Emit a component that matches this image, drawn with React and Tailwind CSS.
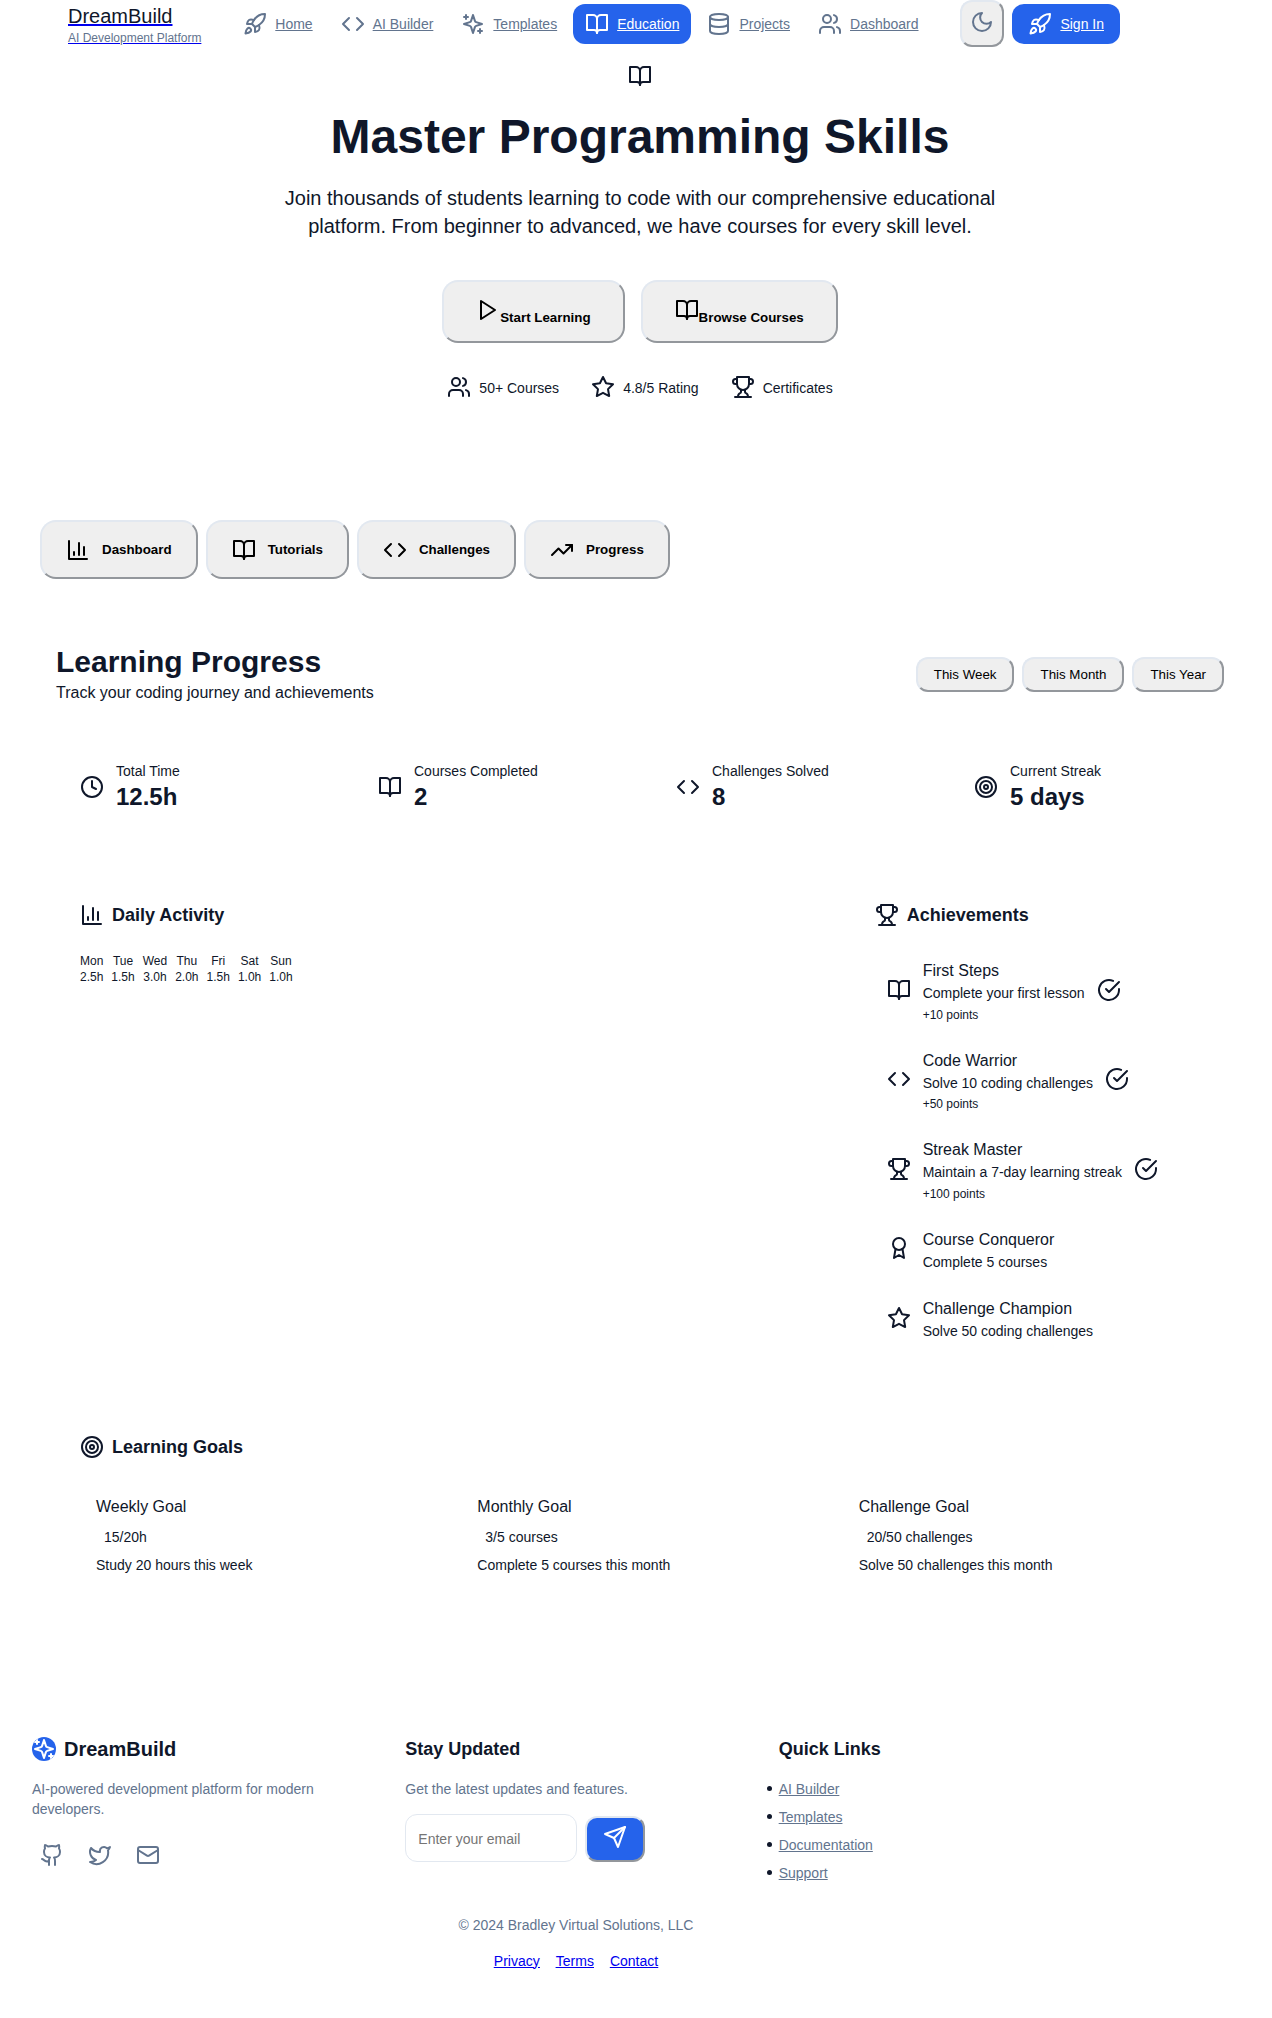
import React from "react";

function Icon({ children, className = "" }) {
  return (
    <svg
      width="24"
      height="24"
      viewBox="0 0 24 24"
      fill="none"
      stroke="currentColor"
      strokeWidth="2"
      strokeLinecap="round"
      strokeLinejoin="round"
      className={"shrink-0 " + className}
    >
      {children}
    </svg>
  );
}

const Rocket = (p) => (
  <Icon {...p}>
    <path d="M4.5 16.5c-1.5 1.26-2 5-2 5s3.74-.5 5-2c.71-.84.7-2.13-.09-2.91a2.18 2.18 0 0 0-2.91-.09z" />
    <path d="m12 15-3-3a22 22 0 0 1 2-3.95A12.88 12.88 0 0 1 22 2c0 2.72-.78 7.5-6 11a22.35 22.35 0 0 1-4 2z" />
    <path d="M9 12H4s.55-3.03 2-4c1.62-1.08 5 0 5 0" />
    <path d="M12 15v5s3.03-.55 4-2c1.08-1.62 0-5 0-5" />
  </Icon>
);
const Code = (p) => (
  <Icon {...p}>
    <polyline points="16 18 22 12 16 6" />
    <polyline points="8 6 2 12 8 18" />
  </Icon>
);
const Sparkles = (p) => (
  <Icon {...p}>
    <path d="m12 3-1.912 5.813a2 2 0 0 1-1.275 1.275L3 12l5.813 1.912a2 2 0 0 1 1.275 1.275L12 21l1.912-5.813a2 2 0 0 1 1.275-1.275L21 12l-5.813-1.912a2 2 0 0 1-1.275-1.275L12 3Z" />
    <path d="M5 3v4" />
    <path d="M19 17v4" />
    <path d="M3 5h4" />
    <path d="M17 19h4" />
  </Icon>
);
const Book = (p) => (
  <Icon {...p}>
    <path d="M2 3h6a4 4 0 0 1 4 4v14a3 3 0 0 0-3-3H2z" />
    <path d="M22 3h-6a4 4 0 0 0-4 4v14a3 3 0 0 1 3-3h7z" />
  </Icon>
);
const Database = (p) => (
  <Icon {...p}>
    <ellipse cx="12" cy="5" rx="9" ry="3" />
    <path d="M3 5V19A9 3 0 0 0 21 19V5" />
    <path d="M3 12A9 3 0 0 0 21 12" />
  </Icon>
);
const Users = (p) => (
  <Icon {...p}>
    <path d="M16 21v-2a4 4 0 0 0-4-4H6a4 4 0 0 0-4 4v2" />
    <circle cx="9" cy="7" r="4" />
    <path d="M22 21v-2a4 4 0 0 0-3-3.87" />
    <path d="M16 3.13a4 4 0 0 1 0 7.75" />
  </Icon>
);
const Moon = (p) => (
  <Icon {...p}>
    <path d="M12 3a6 6 0 0 0 9 9 9 9 0 1 1-9-9Z" />
  </Icon>
);
const Play = (p) => (
  <Icon {...p}>
    <polygon points="5 3 19 12 5 21 5 3" />
  </Icon>
);
const Star = (p) => (
  <Icon {...p}>
    <polygon points="12 2 15.09 8.26 22 9.27 17 14.14 18.18 21.02 12 17.77 5.82 21.02 7 14.14 2 9.27 8.91 8.26 12 2" />
  </Icon>
);
const Trophy = (p) => (
  <Icon {...p}>
    <path d="M6 9H4.5a2.5 2.5 0 0 1 0-5H6" />
    <path d="M18 9h1.5a2.5 2.5 0 0 0 0-5H18" />
    <path d="M4 22h16" />
    <path d="M10 14.66V17c0 .55-.47.98-.97 1.21C7.85 18.75 7 20.24 7 22" />
    <path d="M14 14.66V17c0 .55.47.98.97 1.21C16.15 18.75 17 20.24 17 22" />
    <path d="M18 2H6v7a6 6 0 0 0 12 0V2Z" />
  </Icon>
);
const Chart = (p) => (
  <Icon {...p}>
    <path d="M3 3v18h18" />
    <path d="M18 17V9" />
    <path d="M13 17V5" />
    <path d="M8 17v-3" />
  </Icon>
);
const Trending = (p) => (
  <Icon {...p}>
    <polyline points="22 7 13.5 15.5 8.5 10.5 2 17" />
    <polyline points="16 7 22 7 22 13" />
  </Icon>
);
const Clock = (p) => (
  <Icon {...p}>
    <circle cx="12" cy="12" r="10" />
    <polyline points="12 6 12 12 16 14" />
  </Icon>
);
const Target = (p) => (
  <Icon {...p}>
    <circle cx="12" cy="12" r="10" />
    <circle cx="12" cy="12" r="6" />
    <circle cx="12" cy="12" r="2" />
  </Icon>
);
const Award = (p) => (
  <Icon {...p}>
    <circle cx="12" cy="8" r="6" />
    <path d="M15.477 12.89 17 22l-5-3-5 3 1.523-9.11" />
  </Icon>
);
const CheckCircle = (p) => (
  <Icon {...p}>
    <path d="M22 11.08V12a10 10 0 1 1-5.93-9.14" />
    <path d="m9 11 3 3L22 4" />
  </Icon>
);
const Github = (p) => (
  <Icon {...p}>
    <path d="M15 22v-4a4.8 4.8 0 0 0-1-3.5c3 0 6-2 6-5.5.08-1.25-.27-2.48-1-3.5.28-1.15.28-2.35 0-3.5 0 0-1 0-3 1.5-2.64-.5-5.36-.5-8 0C6 2 5 2 5 2c-.3 1.15-.3 2.35 0 3.5A5.403 5.403 0 0 0 4 9c0 3.5 3 5.5 6 5.5-.39.49-.68 1.05-.85 1.65-.17.6-.22 1.23-.15 1.85v4" />
    <path d="M9 18c-4.51 2-5-2-7-2" />
  </Icon>
);
const Twitter = (p) => (
  <Icon {...p}>
    <path d="M22 4s-.7 2.1-2 3.4c1.6 10-9.4 17.3-18 11.6 2.2.1 4.4-.6 6-2C3 15.5.5 9.6 3 5c2.2 2.6 5.6 4.1 9 4-.9-4.2 4-6.6 7-3.8 1.1 0 3-1.2 3-1.2z" />
  </Icon>
);
const Mail = (p) => (
  <Icon {...p}>
    <rect width="20" height="16" x="2" y="4" rx="2" />
    <path d="m22 7-8.97 5.7a1.94 1.94 0 0 1-2.06 0L2 7" />
  </Icon>
);
const Send = (p) => (
  <Icon {...p}>
    <path d="m22 2-7 20-4-9-9-4Z" />
    <path d="M22 2 11 13" />
  </Icon>
);

const NAV = [
  ["Home", Rocket],
  ["AI Builder", Code],
  ["Templates", Sparkles],
  ["Education", Book],
  ["Projects", Database],
  ["Dashboard", Users],
];

const TABS = [
  ["Dashboard", Chart],
  ["Tutorials", Book],
  ["Challenges", Code],
  ["Progress", Trending],
];

const STATS = [
  ["Total Time", "12.5h", Clock],
  ["Courses Completed", "2", Book],
  ["Challenges Solved", "8", Code],
  ["Current Streak", "5 days", Target],
];

const DAYS = [
  ["Mon", "2.5h"],
  ["Tue", "1.5h"],
  ["Wed", "3.0h"],
  ["Thu", "2.0h"],
  ["Fri", "1.5h"],
  ["Sat", "1.0h"],
  ["Sun", "1.0h"],
];

const ACHIEVEMENTS = [
  ["First Steps", "Complete your first lesson", "+10 points", Book],
  ["Code Warrior", "Solve 10 coding challenges", "+50 points", Code],
  ["Streak Master", "Maintain a 7-day learning streak", "+100 points", Trophy],
  ["Course Conqueror", "Complete 5 courses", null, Award],
  ["Challenge Champion", "Solve 50 coding challenges", null, Star],
];

const GOALS = [
  ["Weekly Goal", "15/20h", "Study 20 hours this week"],
  ["Monthly Goal", "3/5 courses", "Complete 5 courses this month"],
  ["Challenge Goal", "20/50 challenges", "Solve 50 challenges this month"],
];

const BUTTON = "border-2 border-[#e2e8f0] [border-style:outset] bg-[#efefef] text-black text-[13.333px]";

function Header() {
  return (
    <header className="flex h-12 w-[1120px] items-center justify-between pl-[68px]">
      <a href="#" className="flex flex-col">
        <span className="text-xl leading-7 underline decoration-[#0000ee]">DreamBuild</span>
        <span className="text-xs leading-4 text-slate-500 underline decoration-[#0000ee]">
          AI Development Platform
        </span>
      </a>
      <nav className="flex gap-1">
        {NAV.map(([label, Glyph]) => (
          <a
            key={label}
            href="#"
            className={
              "flex h-10 items-center gap-2 rounded-xl px-3 text-sm underline " +
              (label === "Education" ? "bg-[#2563eb] text-white" : "text-slate-500")
            }
          >
            <Glyph />
            {label}
          </a>
        ))}
      </nav>
      <div className="flex h-12 items-center gap-2">
        <button className={BUTTON + " h-[47px] self-start rounded-xl px-2 pt-2 pb-[11px]"}>
          <Moon className="text-slate-500" />
        </button>
        <a
          href="#"
          className="flex h-10 items-center gap-2 rounded-xl bg-[#2563eb] px-4 text-sm text-white underline"
        >
          <Rocket />
          Sign In
        </a>
      </div>
    </header>
  );
}

function Hero() {
  return (
    <section className="flex w-[1280px] flex-col items-center pt-4">
      <Book />
      <h1 className="mt-[19px] text-[48px] leading-[60px] font-bold">Master Programming Skills</h1>
      <p className="mt-[17px] w-[768px] text-center text-xl leading-7">
        Join thousands of students learning to code with our comprehensive educational platform.
        From beginner to advanced, we have courses for every skill level.
      </p>
      <div className="mt-10 flex gap-4">
        <button className={BUTTON + " flex h-[63px] rounded-2xl px-8 pt-4 font-bold"}>
          <Play />
          <span className="pt-3 leading-4">Start Learning</span>
        </button>
        <button className={BUTTON + " flex h-[63px] rounded-2xl px-8 pt-4 font-bold"}>
          <Book />
          <span className="pt-3 leading-4">Browse Courses</span>
        </button>
      </div>
      <div className="mt-8 flex gap-8 text-sm leading-6">
        <div className="flex gap-2">
          <Users />
          <span className="pt-px">50+ Courses</span>
        </div>
        <div className="flex gap-2">
          <Star />
          <span className="pt-px">4.8/5 Rating</span>
        </div>
        <div className="flex gap-2">
          <Trophy />
          <span className="pt-px">Certificates</span>
        </div>
      </div>
    </section>
  );
}

function Heading({ glyph: Glyph, children }) {
  return (
    <h3 className="flex h-6 items-center gap-2 text-lg leading-6 font-bold">
      <Glyph />
      {children}
    </h3>
  );
}

function Progress() {
  return (
    <section className="mx-12 mt-16 pl-2">
      <div className="flex h-[62px] items-center justify-between">
        <div>
          <h2 className="pb-px text-[30px] leading-[37px] font-bold">Learning Progress</h2>
          <p className="text-base leading-6">Track your coding journey and achievements</p>
        </div>
        <div className="flex gap-2">
          {["This Week", "This Month", "This Year"].map((label) => (
            <button key={label} className={BUTTON + " h-[35px] rounded-xl px-4 leading-[15px]"}>
              {label}
            </button>
          ))}
        </div>
      </div>

      <div className="mt-14 grid grid-cols-4 gap-6">
        {STATS.map(([label, value, Glyph]) => (
          <div key={label} className="flex items-center gap-3 px-6">
            <Glyph />
            <div>
              <div className="text-sm leading-5">{label}</div>
              <div className="text-2xl leading-8 font-bold">{value}</div>
            </div>
          </div>
        ))}
      </div>

      <div className="mt-[90px] grid grid-cols-[2fr_1fr] gap-12">
        <div className="px-6">
          <Heading glyph={Chart}>Daily Activity</Heading>
          <div className="mt-[26px] flex gap-2 text-center text-xs leading-4">
            {DAYS.map(([day, hours]) => (
              <div key={day}>
                <div>{day}</div>
                <div>{hours}</div>
              </div>
            ))}
          </div>
        </div>
        <div className="pl-6">
          <Heading glyph={Trophy}>Achievements</Heading>
          <div className="mt-[18px] flex flex-col">
            {ACHIEVEMENTS.map(([title, text, points, Glyph]) => (
              <div key={title} className="flex items-center gap-3 p-3">
                <Glyph />
                <div className="-mb-0.5 pt-0.5">
                  <div className="text-base leading-6">{title}</div>
                  <div className="text-sm leading-[21.5px]">{text}</div>
                  {points && <div className="mt-px pb-px text-xs leading-[18px]">{points}</div>}
                </div>
                {points && <CheckCircle />}
              </div>
            ))}
          </div>
        </div>
      </div>

      <div className="mt-[82px] px-6">
        <Heading glyph={Target}>Learning Goals</Heading>
        <div className="mt-9 grid grid-cols-3 gap-6">
          {GOALS.map(([title, value, text]) => (
            <div key={title} className="px-4">
              <div className="text-base leading-6">{title}</div>
              <div className="mt-2 pl-2 text-sm leading-5">{value}</div>
              <div className="mt-2 text-sm leading-5">{text}</div>
            </div>
          ))}
        </div>
      </div>
    </section>
  );
}

function Footer() {
  return (
    <footer className="mt-[162px] ml-8 w-[1088px] text-sm leading-5 text-slate-500">
      <div className="grid grid-cols-3 gap-8">
        <div>
          <div className="flex h-6 items-center gap-2 text-xl leading-6 font-bold text-[#0f172a]">
            <Sparkles className="rounded-full bg-[#2563eb] text-white" />
            DreamBuild
          </div>
          <p className="mt-[18px]">AI-powered development platform for modern developers.</p>
          <div className="mt-4 flex gap-2">
            <a href="#" className="p-2">
              <Github />
            </a>
            <a href="#" className="p-2">
              <Twitter />
            </a>
            <a href="#" className="p-2">
              <Mail />
            </a>
          </div>
        </div>
        <div>
          <h3 className="text-lg leading-6 font-bold text-[#0f172a]">Stay Updated</h3>
          <p className="mt-[18px]">Get the latest updates and features.</p>
          <div className="mt-[15px] flex items-end gap-2">
            <input
              placeholder="Enter your email"
              className="h-12 w-[172px] rounded-xl border border-slate-200 bg-white px-3 pt-0.5 text-sm placeholder:text-[#757575]"
            />
            <button className="h-[46px] rounded-xl border-2 border-slate-200 bg-[#2563eb] px-4 pb-1 text-white [border-style:outset]">
              <Send />
            </button>
          </div>
        </div>
        <div>
          <h3 className="text-lg leading-6 font-bold text-[#0f172a]">Quick Links</h3>
          <ul className="mt-[18px] flex flex-col gap-2">
            {["AI Builder", "Templates", "Documentation", "Support"].map((label) => (
              <li
                key={label}
                className="flex items-center before:mr-[7px] before:-ml-3 before:size-[5px] before:rounded-full before:bg-[#0f172a]"
              >
                <a href="#" className="underline">
                  {label}
                </a>
              </li>
            ))}
          </ul>
        </div>
      </div>
      <div className="mt-[32px] text-center">© 2024 Bradley Virtual Solutions, LLC</div>
      <div className="mt-4 flex justify-center gap-4 text-[#0000ee] underline">
        <a href="#">Privacy</a>
        <a href="#">Terms</a>
        <a href="#">Contact</a>
      </div>
    </footer>
  );
}

export default function App() {
  return (
    <div className="h-[2018px] w-[1272px] overflow-hidden bg-white font-['Liberation_Sans',Arial,sans-serif] text-[#0f172a]">
      <Header />
      <Hero />
      <div className="mt-[120px] ml-10 flex gap-2">
        {TABS.map(([label, Glyph]) => (
          <button
            key={label}
            className={BUTTON + " flex h-[59px] items-center gap-3 rounded-2xl px-6 font-bold"}
          >
            <Glyph />
            {label}
          </button>
        ))}
      </div>
      <Progress />
      <Footer />
    </div>
  );
}
